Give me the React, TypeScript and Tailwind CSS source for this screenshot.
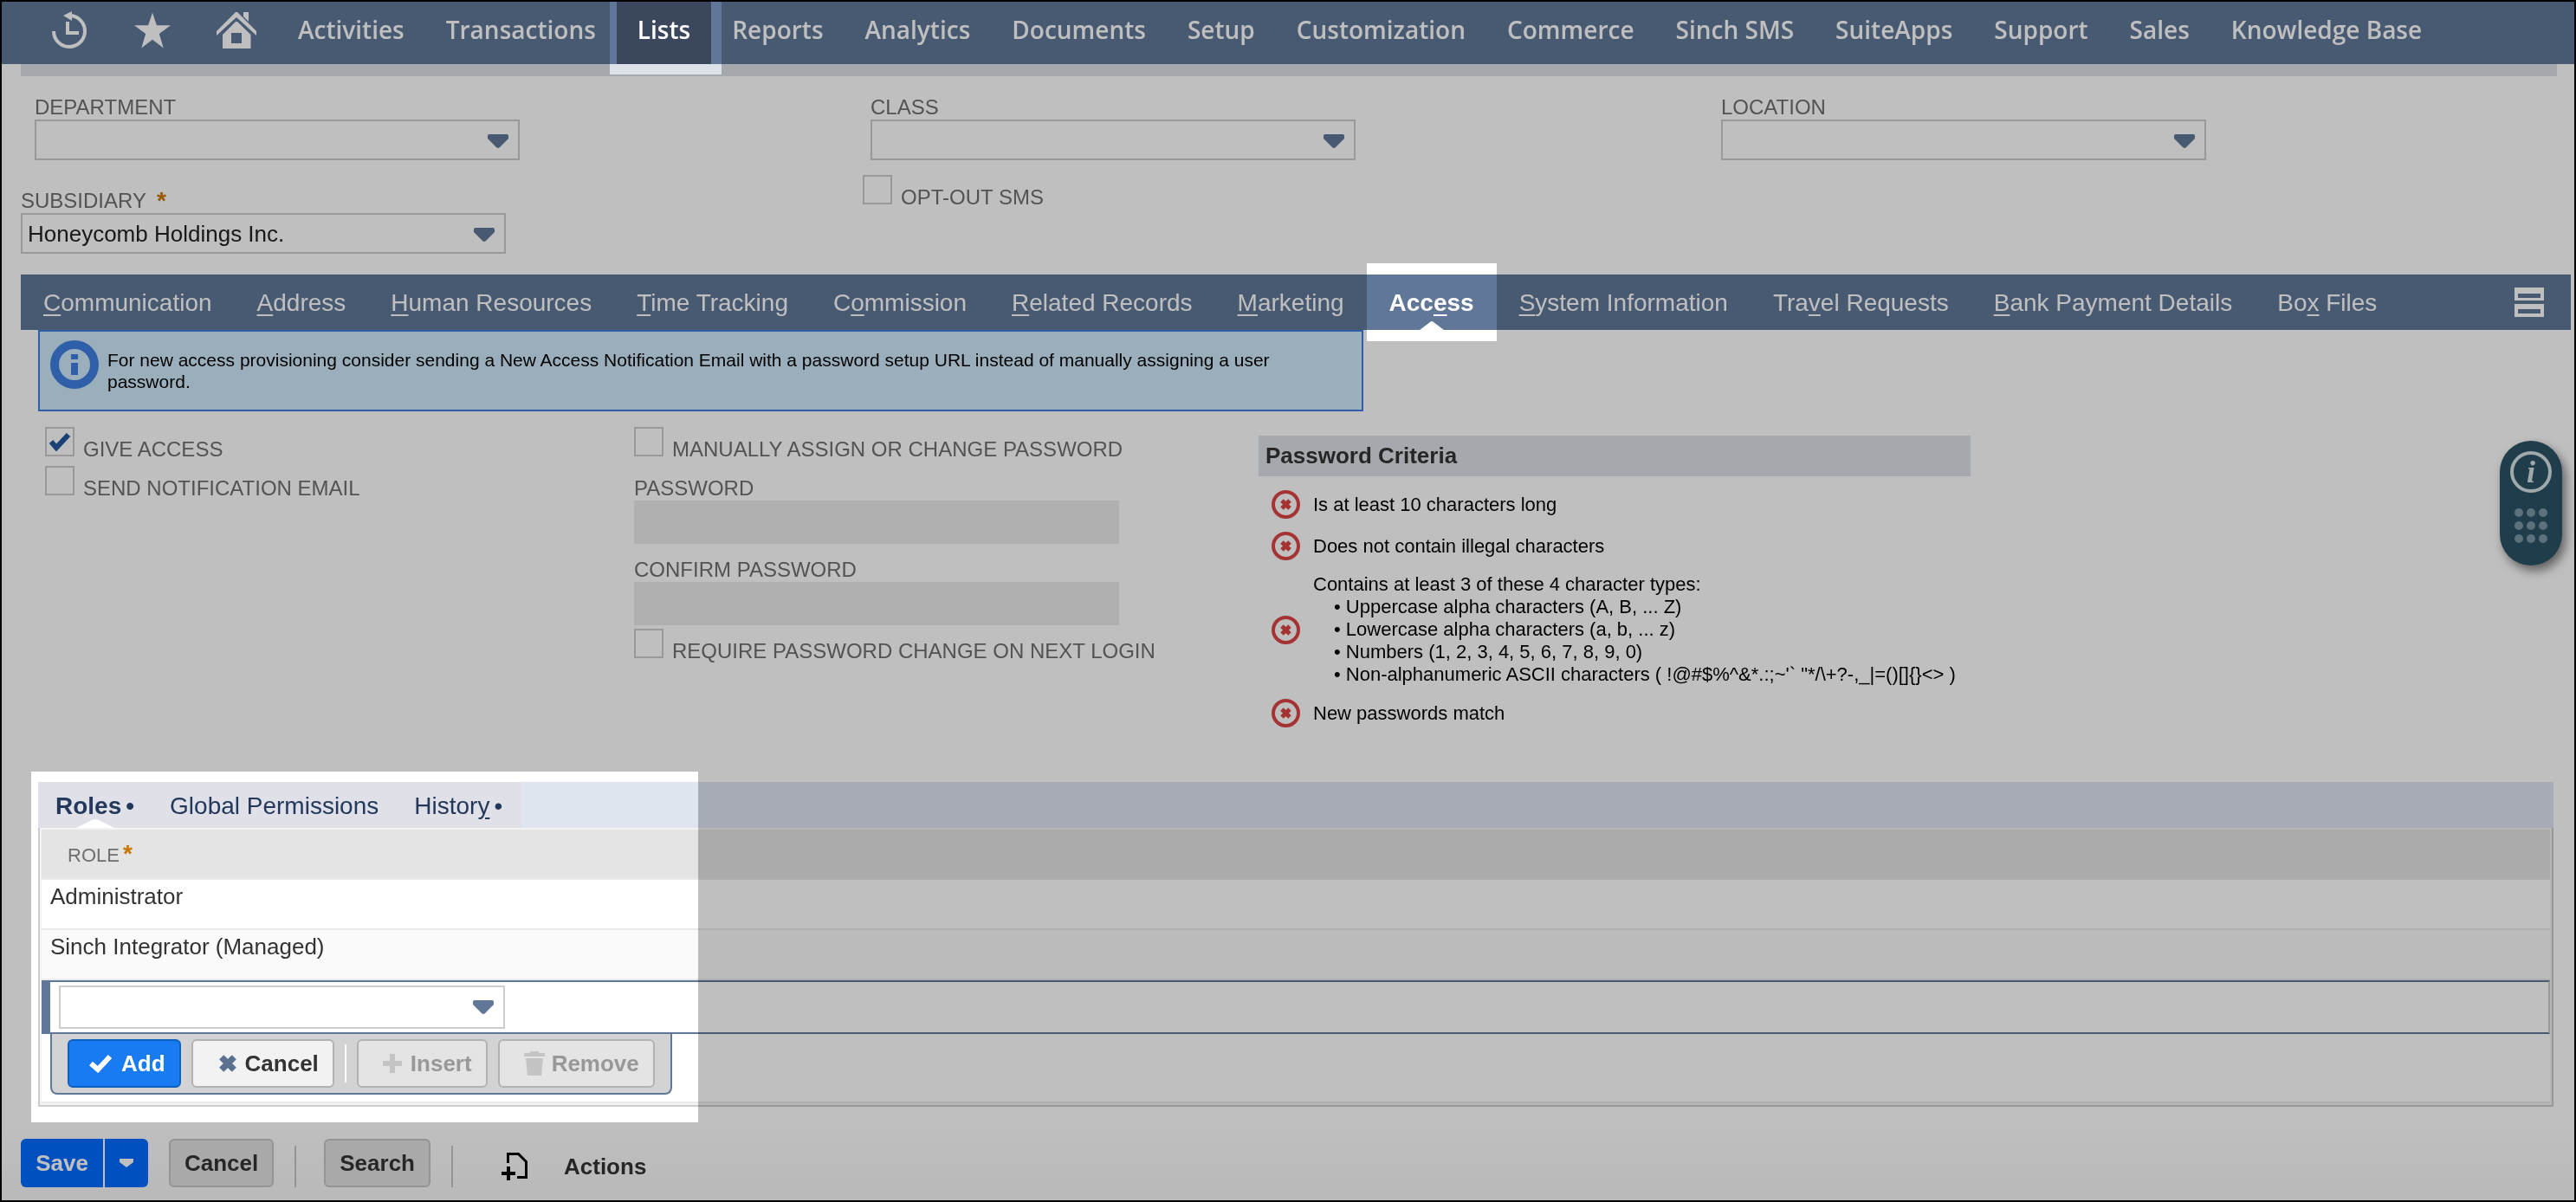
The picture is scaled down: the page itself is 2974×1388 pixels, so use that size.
import React, { useId } from "react";

const navItems = [
  "Activities", "Transactions", "Lists", "Reports", "Analytics", "Documents", "Setup", "Customization",
  "Commerce", "Sinch SMS", "SuiteApps", "Support", "Sales", "Knowledge Base",
];

// Each tab: text before the access key, the key itself, text after it.
const tabs: [string, string, string][] = [
  ["", "C", "ommunication"],
  ["", "A", "ddress"],
  ["", "H", "uman Resources"],
  ["", "T", "ime Tracking"],
  ["C", "o", "mmission"],
  ["", "R", "elated Records"],
  ["", "M", "arketing"],
  ["Acc", "e", "ss"],
  ["", "S", "ystem Information"],
  ["Tra", "v", "el Requests"],
  ["", "B", "ank Payment Details"],
  ["Bo", "x", " Files"],
];

/* Lifts the page-wide shade from whatever lies beneath it. */
function Spotlight({ className }: { className: string }) {
  return <span aria-hidden="true" className={"pointer-events-none absolute z-20 bg-[#404040] mix-blend-color-dodge " + className} />;
}

function Caret({ className }: { className: string }) {
  return (
    <svg viewBox="0 0 24 16" className={className} aria-hidden="true">
      <path d="M2 0H22Q24 0 24 2V5L14 15Q12 17 10 15L0 5V2Q0 0 2 0Z" fill="currentColor" />
    </svg>
  );
}

function SelectBox({ id, label, options, tall }: { id?: string; label?: string; options: string[]; tall?: boolean }) {
  return (
    <div className={"relative " + (tall ? "w-[515px]" : "w-[560px]")}>
      <select
        id={id}
        aria-label={label}
        className={"block w-full appearance-none border-2 border-[#ccc] bg-white px-[6px] text-[26px] leading-8 text-[#222] " + (tall ? "h-[50px]" : "h-[47px]")}
      >
        {options.map((o) => <option key={o}>{o}</option>)}
      </select>
      <Caret className="pointer-events-none absolute right-[13px] top-[17px] h-4 w-6 text-[#607799]" />
    </div>
  );
}

function SelectField({ label, options, required }: { label: string; options: string[]; required?: boolean }) {
  const id = useId();
  return (
    <div>
      <label htmlFor={id} className="mb-[2px] flex h-6 gap-3 text-2xl leading-6 text-[#6f6f6f]">
        {label}
        {required && <span className="text-[28px] font-bold leading-6 text-[#c87800]">*</span>}
      </label>
      <SelectBox id={id} options={options} />
    </div>
  );
}

function CheckField({ label, checked }: { label: string; checked?: boolean }) {
  const id = useId();
  return (
    <div className="flex h-[38px] items-baseline gap-[10px]">
      <span className="relative">
        <input id={id} type="checkbox" defaultChecked={checked} className="peer block size-[34px] appearance-none border-2 border-[#ccc]" />
        <svg viewBox="0 0 24 22" className="pointer-events-none absolute left-[5px] top-[6px] hidden h-[22px] w-6 peer-checked:block" aria-hidden="true">
          <path d="M2 11L8 18L22 3" fill="none" stroke="#24599f" strokeWidth="6" />
        </svg>
      </span>
      <label htmlFor={id} className="text-2xl leading-6 text-[#6f6f6f]">{label}</label>
    </div>
  );
}

function PasswordField({ label }: { label: string }) {
  const id = useId();
  return (
    <div>
      <label htmlFor={id} className="mb-[2px] block text-2xl leading-6 text-[#6f6f6f]">{label}</label>
      <input id={id} type="password" disabled className="block h-[50px] w-[560px] bg-[#ebebeb] px-2" />
    </div>
  );
}

function Criterion({ children }: { children: React.ReactNode }) {
  return (
    <li className="flex min-h-[33px] items-center gap-[15px]">
      <svg viewBox="0 0 33 33" className="size-[33px] shrink-0" aria-hidden="true">
        <circle cx="16.500" cy="16.500" r="14.500" fill="none" stroke="#dc4444" strokeWidth="4" />
        <path d="M12 12L21 21M21 12L12 21" stroke="#dc4444" strokeWidth="5" />
      </svg>
      <div>{children}</div>
    </li>
  );
}

function NavIcons() {
  return (
    <div className="flex items-center gap-[53px] pb-[6px] pl-[58px] pr-6">
      <a href="#recent" aria-label="Recent records">
        <svg viewBox="0 0 42 44" className="h-11 w-[42px]" fill="none" stroke="white" aria-hidden="true">
          <path d="M2 23A18 18 0 1 0 21 5" strokeWidth="4" />
          <path d="M13 5L23 0V11Z" fill="white" stroke="none" />
          <path d="M18 12V25H31" strokeWidth="4" />
        </svg>
      </a>
      <a href="#shortcuts" aria-label="Shortcuts">
        <svg viewBox="0 0 43 42" className="h-[42px] w-[42px]" fill="white" aria-hidden="true">
          <path d="M21.500 0L26.500 15H43L29.500 25L34.500 42L21.500 32L8.500 42L13.500 25L0 15H16.500Z" />
        </svg>
      </a>
      <a href="#home" aria-label="Home">
        <svg viewBox="0 0 46 42" className="h-[42px] w-[46px]" fill="white" aria-hidden="true">
          <path d="M22 0H24L46 22V27L23 6L0 27V22Z" />
          <path d="M31 0H37V11L31 5Z" />
          <path fillRule="evenodd" d="M22 11H24L39.500 26V42H7V26ZM17 24V36H29V24Z" />
        </svg>
      </a>
    </div>
  );
}

const rowButton = "flex h-14 items-center rounded-md border-2 pr-4 text-[26px] font-bold leading-8 ";
const footButton = "h-14 rounded-md border-2 border-[#c6c6c6] bg-[#e2e2e2] px-4 text-[26px] font-bold leading-8 text-[#333]";

export default function App() {
  return (
    <div className="relative flex min-h-screen flex-col border-2 border-black bg-white font-['Liberation_Sans',Arial,sans-serif] text-black">
      <div aria-hidden="true" className="pointer-events-none absolute inset-0 z-10 bg-black/25" />

      <nav className="flex h-[72px] bg-[#607799] font-['Open_Sans',sans-serif] text-[28px] font-semibold text-white">
        <NavIcons />
        {navItems.map((item) =>
          item === "Lists" ? (
            <a key={item} href="#lists" aria-current="page" className="relative flex items-center bg-[#3b475e] px-6 pb-2">
              {item}
              <Spotlight className="-bottom-3 -left-2 -right-3 top-0" />
            </a>
          ) : (
            <a key={item} href={"#" + item} className="flex items-center whitespace-nowrap px-6 pb-2">{item}</a>
          )
        )}
      </nav>

      <main className="flex flex-col">
        <div className="ml-[22px] mr-5 h-[14px] bg-[#dde2e8]" />

        <section className="ml-[22px] mr-5 mt-6 grid grid-cols-[972fr_982fr_974fr]">
          <div className="flex flex-col gap-[35px]">
            <div className="pl-4"><SelectField label="DEPARTMENT" options={[""]} /></div>
            <SelectField label="SUBSIDIARY" options={["Honeycomb Holdings Inc."]} required />
          </div>
          <div className="flex flex-col gap-[17px]">
            <div className="pl-[9px]"><SelectField label="CLASS" options={[""]} /></div>
            <CheckField label="OPT-OUT SMS" />
          </div>
          <div className="pl-[9px]"><SelectField label="LOCATION" options={[""]} /></div>
        </section>

        <nav className="ml-[22px] mr-1 mt-6 flex h-16 bg-[#607799] text-[28px] text-white">
          {tabs.map(([pre, key, post]) => {
            const active = pre === "Acc";
            return (
              <a key={pre + key + post} href={"#" + key} className={"relative flex items-center whitespace-nowrap px-[26px] pt-[2px] " + (active ? "font-bold" : "")}>
                <span>{pre}<u className="underline-offset-4">{key}</u>{post}</span>
                {active && (
                  <>
                    <svg viewBox="0 0 28 10" className="absolute bottom-0 left-1/2 h-[10px] w-7 -translate-x-1/2" aria-hidden="true">
                      <path d="M0 10L12 1Q14 -1 16 1L28 10Z" fill="white" />
                    </svg>
                    <Spotlight className="-inset-y-[13px] inset-x-0" />
                  </>
                )}
              </a>
            );
          })}
          <button aria-label="Unlayered view" className="ml-auto mr-[31px] self-center">
            <svg viewBox="0 0 34 34" className="size-[34px]" fill="white" fillRule="evenodd" aria-hidden="true">
              <path d="M0 0H34V15H0ZM4 7V12H30V7Z" />
              <path d="M0 19H34V34H0ZM4 25V30H30V25Z" />
            </svg>
          </button>
        </nav>

        <section className="ml-[42px] flex h-[94px] w-[1530px] items-start gap-[10px] border-2 border-[#3f7fe0] bg-[#cfe9fa] pl-3 pr-4 pt-[10px]">
          <svg viewBox="0 0 56 56" className="size-14 shrink-0" aria-hidden="true">
            <circle cx="28" cy="28" r="23" fill="none" stroke="#3f7fe0" strokeWidth="10" />
            <path d="M24 16H32V22H24ZM24 26H32V40H24Z" fill="#3f7fe0" />
          </svg>
          <p className="w-[1400px] pt-[10px] text-[21px] leading-[25px]">
            For new access provisioning consider sending a New Access Notification Email with a password setup URL instead of manually assigning a user password.
          </p>
        </section>

        <section className="ml-[50px] mr-6 mt-[18px] grid grid-cols-[680fr_721fr_1495fr]">
          <div className="flex flex-col gap-[7px]">
            <CheckField label="GIVE ACCESS" checked />
            <CheckField label="SEND NOTIFICATION EMAIL" />
          </div>
          <div className="flex flex-col">
            <CheckField label="MANUALLY ASSIGN OR CHANGE PASSWORD" />
            <div className="mb-1 mt-[21px] flex flex-col gap-[18px]">
              <PasswordField label="PASSWORD" />
              <PasswordField label="CONFIRM PASSWORD" />
            </div>
            <CheckField label="REQUIRE PASSWORD CHANGE ON NEXT LOGIN" />
          </div>
          <div className="w-[822px] pt-[10px]">
            <h2 className="bg-[#dde2e8] px-2 text-[26px] font-bold leading-[47px] text-[#333]">Password Criteria</h2>
            <ul className="mt-4 flex flex-col gap-[15px] pl-[15px] text-[22px] leading-[26px]">
              <Criterion>Is at least 10 characters long</Criterion>
              <Criterion>Does not contain illegal characters</Criterion>
              <Criterion>
                Contains at least 3 of these 4 character types:
                <ul className="whitespace-nowrap pl-6">
                  <li>• Uppercase alpha characters (A, B, ... Z)</li>
                  <li>• Lowercase alpha characters (a, b, ... z)</li>
                  <li>• Numbers (1, 2, 3, 4, 5, 6, 7, 8, 9, 0)</li>
                  <li>{"• Non-alphanumeric ASCII characters ( !@#$%^&*.:;~'` \"*/\\+?-,_|=()[]{}<> )"}</li>
                </ul>
              </Criterion>
              <Criterion>New passwords match</Criterion>
            </ul>
          </div>
        </section>

        <section className="relative ml-[42px] mr-6 mt-[63px]">
          <nav className="flex h-[53px] bg-[#dfe6f0] text-[28px] text-[#24385b]">
            <div className="flex items-center gap-[41px] bg-[#dfe1e9] pl-5 pr-[22px] pt-[2px]">
              <a href="#roles" className="flex items-center gap-[5px] font-bold">
                Roles<span>•</span>
              </a>
              <a href="#permissions">Global Permissions</a>
              <a href="#history" className="flex gap-[5px]"><span>Histor<u className="underline-offset-4">y</u></span><span>•</span></a>
            </div>
            <svg viewBox="0 0 44 10" className="absolute left-11 top-[43px] h-[10px] w-11" aria-hidden="true">
              <path d="M0 10L18 1Q22 -1 26 1L44 10Z" fill="white" />
            </svg>
          </nav>
          <div className="border-2 border-t-0 border-[#ccc]">
            <div className="border-2 border-[#f3f3f3]">
              <table className="w-full border-collapse text-left">
                <thead>
                  <tr className="h-[57px] border-b-2 border-[#eaeaea] bg-[#e5e5e5]">
                    <th className="pl-[30px] text-[22px] font-normal leading-8 text-[#6f6f6f]">
                      <span className="flex items-start gap-1 pt-1">ROLE<span className="text-[28px] font-bold leading-7 text-[#c87800]">*</span></span>
                    </th>
                  </tr>
                </thead>
                <tbody className="text-[26px] leading-8 text-[#333]">
                  <tr className="h-[58px] border-b-2 border-[#eaeaea] align-top"><td className="pl-[10px] pt-[3px]">Administrator</td></tr>
                  <tr className="h-[58px] border-b-2 border-[#eaeaea] bg-[#fafafa] align-top"><td className="pl-[10px] pt-[3px]">Sinch Integrator (Managed)</td></tr>
                </tbody>
              </table>
              <div className="flex h-[62px] items-center border-y-2 border-l-[10px] border-r-2 border-y-[#607799] border-l-[#607799] border-r-[#ccc] pl-[10px]">
                <SelectBox label="Role" options={[""]} tall />
              </div>
              <div className="mb-2 ml-[10px] flex h-[70px] w-fit items-center gap-3 rounded-b-lg border-2 border-t-0 border-[#607799] bg-[#d3d3d3] px-[18px]">
                <button className={rowButton + "gap-[10px] border-[#1060bf] bg-[#187bf2] pl-[22px] text-white"}>
                  <svg viewBox="0 0 28 22" className="h-[22px] w-7" aria-hidden="true"><path d="M3 11L11 18L25 3" fill="none" stroke="white" strokeWidth="6" /></svg>
                  Add
                </button>
                <button className={rowButton + "gap-[10px] border-[#b2b2b2] bg-[#f2f2f2] pl-[30px] text-[#333]"}>
                  <svg viewBox="0 0 22 22" className="size-5" aria-hidden="true"><path d="M3 3L19 19M19 3L3 19" stroke="#5c7290" strokeWidth="8" /></svg>
                  Cancel
                </button>
                <span className="h-11 w-[2px] bg-white" />
                <button disabled className={rowButton + "gap-[10px] border-[#b2b2b2] bg-[#e5e5e5] pl-7 text-[#999]"}>
                  <svg viewBox="0 0 22 22" className="size-[22px]" aria-hidden="true"><path d="M11 0V22M0 11H22" stroke="#c4c4c4" strokeWidth="6" /></svg>
                  Insert
                </button>
                <button disabled className={rowButton + "gap-2 border-[#b2b2b2] bg-[#e5e5e5] pl-7 text-[#999]"}>
                  <svg viewBox="0 0 24 28" className="h-7 w-6" fill="#c4c4c4" aria-hidden="true"><path d="M0 2H6L8 0H16L18 2H24V6H0ZM2 8H22L20 28H4Z" /></svg>
                  Remove
                </button>
              </div>
              <div className="h-[2px] bg-[#eaeaea]" />
            </div>
          </div>
          <Spotlight className="-bottom-[18px] -left-2 -top-3 w-[770px]" />
        </section>

        <footer className="mt-[18px] flex items-center bg-linear-to-b from-white to-[#f7f7f7] pb-[15px] pl-[22px] pt-[19px]">
          <div className="flex h-14 overflow-hidden rounded-md bg-[#006bff] text-white">
            <button className="w-[95px] text-[26px] font-bold leading-8">Save</button>
            <span className="w-[2px] bg-white" />
            <button aria-label="More save options" className="flex w-[50px] items-center justify-center">
              <svg viewBox="0 0 16 10" className="h-[10px] w-4" fill="white" aria-hidden="true"><path d="M0 0H16V4L8 10L0 4Z" /></svg>
            </button>
          </div>
          <button className={footButton + " ml-6"}>Cancel</button>
          <span className="ml-6 mr-8 h-12 w-[2px] self-end bg-[#c6c6c6]" />
          <button className={footButton}>Search</button>
          <span className="ml-6 mr-14 h-12 w-[2px] self-end bg-[#c6c6c6]" />
          <button className="flex items-center gap-[42px] pt-2 text-[26px] font-bold leading-8 text-[#333]">
            <svg viewBox="0 0 30 32" className="h-8 w-[30px]" fill="none" stroke="black" strokeWidth="3" aria-hidden="true">
              <path d="M7.500 12V1.500H19.500L28.500 10.500V28.500H18" />
              <path d="M8 16V32M0 24H16" strokeWidth="4" />
            </svg>
            Actions
          </button>
        </footer>
      </main>

      <aside className="absolute right-[14px] top-[507px] flex h-36 w-[72px] flex-col items-center rounded-full bg-[#2b5264] pt-3 shadow-[4px_6px_12px_rgba(0,0,0,0.5)]">
        <button aria-label="Guided help">
          <svg viewBox="0 0 48 108" className="h-[108px] w-12" aria-hidden="true">
            <circle cx="24" cy="24" r="22" fill="none" stroke="#d5e0e5" strokeWidth="4" />
            <text x="24" y="36" textAnchor="middle" fill="#d5e0e5" fontFamily="Liberation Serif, serif" fontStyle="italic" fontWeight="bold" fontSize="36">i</text>
            {[71, 86, 101].map((y) => [10, 24, 38].map((x) => <circle key={x + "-" + y} cx={x} cy={y} r="5" fill="#7b97a6" />))}
          </svg>
        </button>
      </aside>
    </div>
  );
}
